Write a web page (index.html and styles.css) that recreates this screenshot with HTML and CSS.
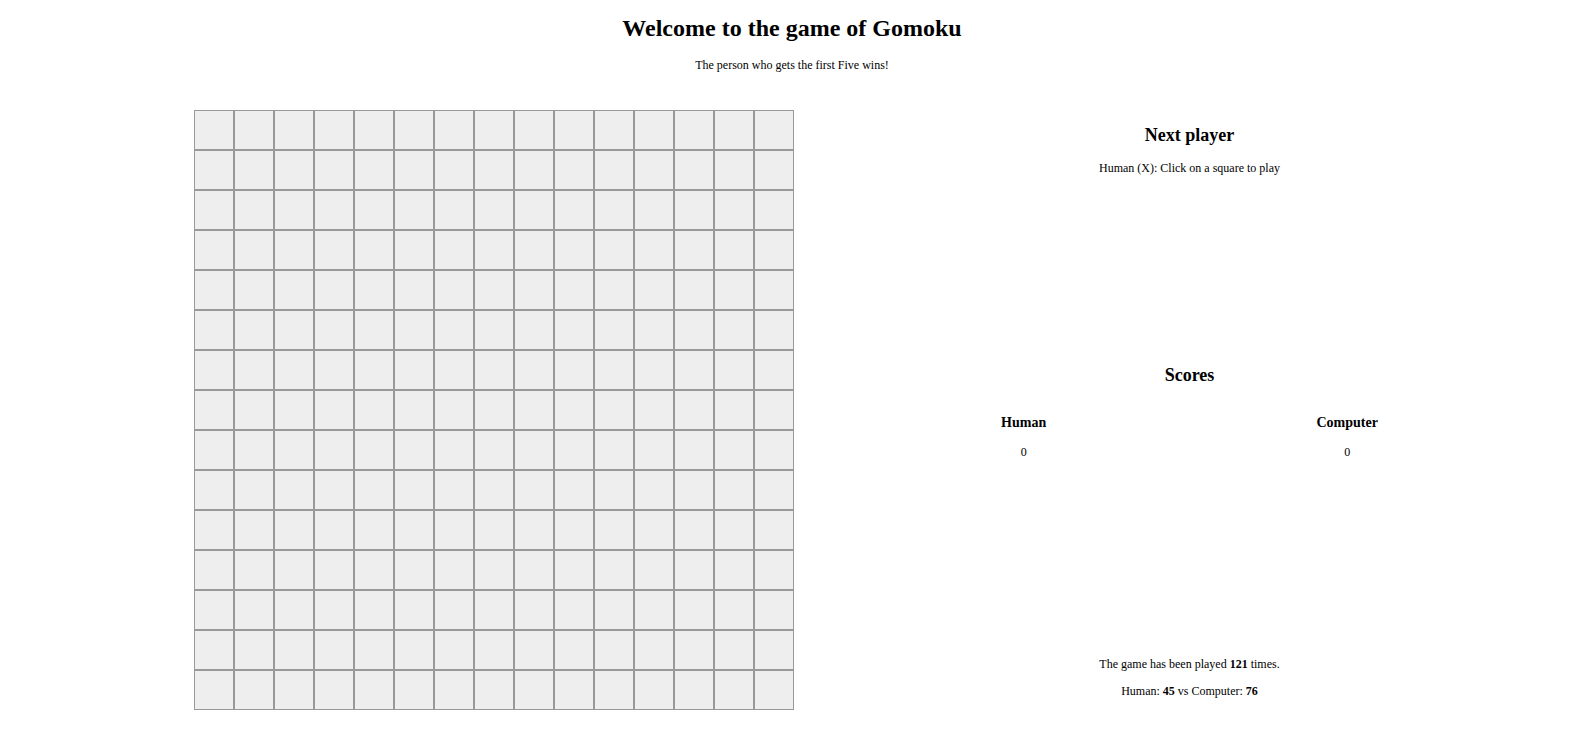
FILE: index.html
```html
<!DOCTYPE html>
<html lang="en">
<head>
<meta charset="utf-8">
<title>Gomoku</title>
<link rel="stylesheet" href="styles.css">
</head>
<body>
<header class="header">
  <h1 class="title">Welcome to the game of Gomoku</h1>
  <p class="subtitle">The person who gets the first Five wins!</p>
</header>
<main class="game">
  <div class="board">
    <div class="cell"></div><div class="cell"></div><div class="cell"></div><div class="cell"></div><div class="cell"></div><div class="cell"></div><div class="cell"></div><div class="cell"></div><div class="cell"></div><div class="cell"></div><div class="cell"></div><div class="cell"></div><div class="cell"></div><div class="cell"></div><div class="cell"></div>
    <div class="cell"></div><div class="cell"></div><div class="cell"></div><div class="cell"></div><div class="cell"></div><div class="cell"></div><div class="cell"></div><div class="cell"></div><div class="cell"></div><div class="cell"></div><div class="cell"></div><div class="cell"></div><div class="cell"></div><div class="cell"></div><div class="cell"></div>
    <div class="cell"></div><div class="cell"></div><div class="cell"></div><div class="cell"></div><div class="cell"></div><div class="cell"></div><div class="cell"></div><div class="cell"></div><div class="cell"></div><div class="cell"></div><div class="cell"></div><div class="cell"></div><div class="cell"></div><div class="cell"></div><div class="cell"></div>
    <div class="cell"></div><div class="cell"></div><div class="cell"></div><div class="cell"></div><div class="cell"></div><div class="cell"></div><div class="cell"></div><div class="cell"></div><div class="cell"></div><div class="cell"></div><div class="cell"></div><div class="cell"></div><div class="cell"></div><div class="cell"></div><div class="cell"></div>
    <div class="cell"></div><div class="cell"></div><div class="cell"></div><div class="cell"></div><div class="cell"></div><div class="cell"></div><div class="cell"></div><div class="cell"></div><div class="cell"></div><div class="cell"></div><div class="cell"></div><div class="cell"></div><div class="cell"></div><div class="cell"></div><div class="cell"></div>
    <div class="cell"></div><div class="cell"></div><div class="cell"></div><div class="cell"></div><div class="cell"></div><div class="cell"></div><div class="cell"></div><div class="cell"></div><div class="cell"></div><div class="cell"></div><div class="cell"></div><div class="cell"></div><div class="cell"></div><div class="cell"></div><div class="cell"></div>
    <div class="cell"></div><div class="cell"></div><div class="cell"></div><div class="cell"></div><div class="cell"></div><div class="cell"></div><div class="cell"></div><div class="cell"></div><div class="cell"></div><div class="cell"></div><div class="cell"></div><div class="cell"></div><div class="cell"></div><div class="cell"></div><div class="cell"></div>
    <div class="cell"></div><div class="cell"></div><div class="cell"></div><div class="cell"></div><div class="cell"></div><div class="cell"></div><div class="cell"></div><div class="cell"></div><div class="cell"></div><div class="cell"></div><div class="cell"></div><div class="cell"></div><div class="cell"></div><div class="cell"></div><div class="cell"></div>
    <div class="cell"></div><div class="cell"></div><div class="cell"></div><div class="cell"></div><div class="cell"></div><div class="cell"></div><div class="cell"></div><div class="cell"></div><div class="cell"></div><div class="cell"></div><div class="cell"></div><div class="cell"></div><div class="cell"></div><div class="cell"></div><div class="cell"></div>
    <div class="cell"></div><div class="cell"></div><div class="cell"></div><div class="cell"></div><div class="cell"></div><div class="cell"></div><div class="cell"></div><div class="cell"></div><div class="cell"></div><div class="cell"></div><div class="cell"></div><div class="cell"></div><div class="cell"></div><div class="cell"></div><div class="cell"></div>
    <div class="cell"></div><div class="cell"></div><div class="cell"></div><div class="cell"></div><div class="cell"></div><div class="cell"></div><div class="cell"></div><div class="cell"></div><div class="cell"></div><div class="cell"></div><div class="cell"></div><div class="cell"></div><div class="cell"></div><div class="cell"></div><div class="cell"></div>
    <div class="cell"></div><div class="cell"></div><div class="cell"></div><div class="cell"></div><div class="cell"></div><div class="cell"></div><div class="cell"></div><div class="cell"></div><div class="cell"></div><div class="cell"></div><div class="cell"></div><div class="cell"></div><div class="cell"></div><div class="cell"></div><div class="cell"></div>
    <div class="cell"></div><div class="cell"></div><div class="cell"></div><div class="cell"></div><div class="cell"></div><div class="cell"></div><div class="cell"></div><div class="cell"></div><div class="cell"></div><div class="cell"></div><div class="cell"></div><div class="cell"></div><div class="cell"></div><div class="cell"></div><div class="cell"></div>
    <div class="cell"></div><div class="cell"></div><div class="cell"></div><div class="cell"></div><div class="cell"></div><div class="cell"></div><div class="cell"></div><div class="cell"></div><div class="cell"></div><div class="cell"></div><div class="cell"></div><div class="cell"></div><div class="cell"></div><div class="cell"></div><div class="cell"></div>
    <div class="cell"></div><div class="cell"></div><div class="cell"></div><div class="cell"></div><div class="cell"></div><div class="cell"></div><div class="cell"></div><div class="cell"></div><div class="cell"></div><div class="cell"></div><div class="cell"></div><div class="cell"></div><div class="cell"></div><div class="cell"></div><div class="cell"></div>
  </div>
  <aside class="panel">
    <section class="section next">
      <h2 class="heading">Next player</h2>
      <p class="text">Human (X): Click on a square to play</p>
    </section>
    <section class="section scores">
      <h2 class="heading">Scores</h2>
      <div class="score-row">
        <div class="score-col">
          <h3 class="player">Human</h3>
          <p class="text">0</p>
        </div>
        <div class="score-col">
          <h3 class="player">Computer</h3>
          <p class="text">0</p>
        </div>
      </div>
    </section>
    <section class="section stats">
      <p class="text">The game has been played <b>121</b> times.</p>
      <p class="text">Human: <b>45</b> vs Computer: <b>76</b></p>
    </section>
  </aside>
</main>
</body>
</html>
```

FILE: styles.css
```css
html, body {
  background: #fff;
}
body {
  margin: 0;
  font-family: "Liberation Serif", "Times New Roman", serif;
  font-size: 12px;
  color: #000;
}
.header {
  padding: 15px 8px 0 0;
  text-align: center;
}
.title {
  margin: 0;
  font-size: 24px;
  font-weight: bold;
}
.subtitle {
  margin: 16px 0 0;
  font-size: 12px;
}
.game {
  display: flex;
  align-items: flex-start;
  margin-top: 37px;
  padding-left: 194px;
  gap: 72px;
}
.board {
  display: grid;
  grid-template-columns: repeat(15, 40px);
  grid-auto-rows: 40px;
  flex: none;
}
.cell {
  box-sizing: border-box;
  border: 1px solid #999;
  background: #eee;
}
.panel {
  width: 647px;
  display: flex;
  flex-direction: column;
  text-align: center;
}
.section {
  display: flow-root;
}
.heading {
  font-size: 18px;
  font-weight: bold;
  margin: 15px 0;
}
.text {
  margin: 12px 0;
}
.scores {
  margin-top: 162px;
}
.score-row {
  display: flex;
  justify-content: space-around;
}
.score-col {
  display: flow-root;
}
.player {
  font-size: 14px;
  font-weight: bold;
  margin: 14px 0;
}
.stats {
  margin-top: 173px;
}
```
